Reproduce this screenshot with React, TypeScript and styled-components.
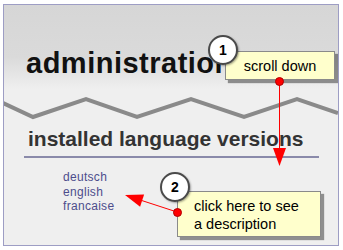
import React from "react";
import { styled, createGlobalStyle } from "styled-components";

const GlobalStyle = createGlobalStyle`
  html, body {
    margin: 0;
    padding: 0;
    background: #fff;
    font-family: "Liberation Sans", Arial, sans-serif;
  }
`;

const Frame = styled.div`
  position: relative;
  display: flex;
  flex-direction: column;
  box-sizing: border-box;
  width: 336px;
  height: 242px;
  margin: 4px 0 0 3px;
  border: 1px solid #9d9dc4;
  background: #efefef;
  overflow: hidden;
`;

const Header = styled.div`
  display: flex;
  align-items: flex-start;
  flex: 0 0 90px;
  box-sizing: border-box;
  padding: 41px 0 0 22px;
  background: linear-gradient(#d6d6d6 0, #dadada 52px, #efefef 84px);
`;

const Title = styled.h1`
  margin: 0;
  font-size: 29px;
  line-height: 34px;
  font-weight: bold;
  letter-spacing: 0.5px;
  color: #111;
  white-space: nowrap;
`;

const Zigzag = styled.svg`
  display: block;
  flex: 0 0 28px;
  width: 334px;
  height: 28px;
`;

const Section = styled.section`
  display: flex;
  flex-direction: column;
  gap: 12px;
  padding: 4px 0 0 20px;
`;

const Heading = styled.h2`
  margin: 0;
  width: 295px;
  box-sizing: border-box;
  padding: 0 0 5px 4px;
  font-size: 21px;
  line-height: 24px;
  font-weight: bold;
  color: #333;
  border-bottom: 2px solid #8a8aaa;
  white-space: nowrap;
`;

const LangList = styled.ul`
  list-style: none;
  display: flex;
  flex-direction: column;
  margin: 0;
  padding: 0 0 0 39px;
`;

const LangItem = styled.li`
  font-size: 12px;
  line-height: 14.5px;
  letter-spacing: 0.3px;
  color: #4d4d8c;
  cursor: pointer;
`;

const Overlay = styled.svg`
  position: absolute;
  left: 0;
  top: 0;
  width: 334px;
  height: 240px;
  pointer-events: none;
`;

const Note = styled.div<{ $left: number; $top: number; $w: number; $h: number; $center?: boolean }>`
  position: absolute;
  left: ${(p) => p.$left}px;
  top: ${(p) => p.$top}px;
  width: ${(p) => p.$w}px;
  height: ${(p) => p.$h}px;
  box-sizing: border-box;
  background: #ffffcc;
  border: 1px solid #8a8a8a;
  box-shadow: 3px 3px 1px rgba(0, 0, 0, 0.4);
  color: #000;
  font-size: 14.5px;
  line-height: 18px;
  padding: ${(p) => (p.$center ? "5px 0 0 0" : "5px 0 0 16px")};
  text-align: ${(p) => (p.$center ? "center" : "left")};
`;

const Badge = styled.div<{ $left: number; $top: number }>`
  position: absolute;
  left: ${(p) => p.$left}px;
  top: ${(p) => p.$top}px;
  width: 30px;
  height: 30px;
  box-sizing: border-box;
  border-radius: 50%;
  border: 2px solid #4a4a4a;
  background: #fff;
  box-shadow: 1px 1px 2px rgba(0, 0, 0, 0.35);
  display: flex;
  align-items: center;
  justify-content: center;
  font-size: 14px;
  font-weight: bold;
  color: #000;
`;

const Dot = styled.span<{ $left: number; $top: number }>`
  position: absolute;
  left: ${(p) => p.$left}px;
  top: ${(p) => p.$top}px;
  width: 9px;
  height: 9px;
  box-sizing: border-box;
  border-radius: 50%;
  background: #f00;
  border: 1px solid #b00000;
`;

const languages = ["deutsch", "english", "francaise"];

export default function App() {
  return (
    <>
      <GlobalStyle />
      <Frame>
        <Header>
          <Title>administration</Title>
        </Header>
        <Zigzag viewBox="0 0 334 28">
          <polyline
            points="-1,8 29,22 82,4 133,22 187,4 240,22 293,4 334,18"
            fill="none"
            stroke="#8a8a8a"
            strokeWidth="4"
          />
        </Zigzag>
        <Section>
          <Heading>installed language versions</Heading>
          <LangList>
            {languages.map((l) => (
              <LangItem key={l}>{l}</LangItem>
            ))}
          </LangList>
        </Section>

        {/* callout pointers */}
        <Overlay viewBox="0 0 334 240">
          <line x1="275.5" y1="76" x2="275.5" y2="145" stroke="#f00" strokeWidth="1" />
          <polygon points="269,143 282,143 275.5,161" fill="#f00" />
          <line x1="173" y1="207" x2="138" y2="195.6" stroke="#f00" strokeWidth="1" />
          <polygon points="121,190 140.1,189.4 136.1,201.8" fill="#f00" />
        </Overlay>

        <Note $left={221} $top={46} $w={110} $h={29} $center>
          scroll down
        </Note>
        <Badge $left={204} $top={30}>1</Badge>
        <Dot $left={271} $top={72} />

        <Note $left={173} $top={186} $w={144} $h={46}>
          click here to see
          <br />a description
        </Note>
        <Badge $left={156} $top={167}>2</Badge>
        <Dot $left={169} $top={203} />
      </Frame>
    </>
  );
}
